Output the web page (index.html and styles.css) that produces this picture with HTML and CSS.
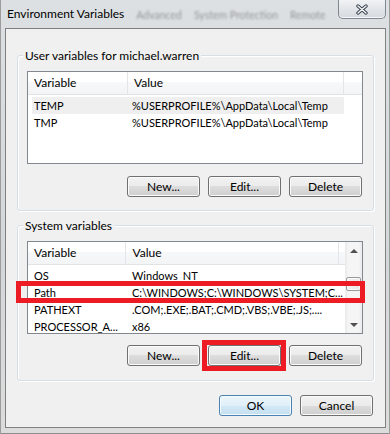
FILE: index.html
```html
<!DOCTYPE html>
<html lang="en">
<head>
  <meta charset="UTF-8" />
  <title>Environment Variables</title>
  <link rel="stylesheet" href="styles.css">
</head>
<body>

  <div class="window">
    <div class="titlebar">
      <span class="title">Environment Variables</span>
      <div class="ghost-tabs">
        <span>Advanced</span>
        <span>System Protection</span>
        <span>Remote</span>
      </div>
      <button class="close-btn">
        <svg width="12" height="11" viewBox="0 0 12 11">
          <path d="M2 2 L10 9 M10 2 L2 9" stroke="#3b4350" stroke-width="3.4" stroke-linecap="round" fill="none" />
          <path d="M2 2 L10 9 M10 2 L2 9" stroke="#f4f6f8" stroke-width="1.4" stroke-linecap="round" fill="none" />
        </svg>
      </button>
    </div>

    <div class="client">

      <!-- User variables -->
      <div class="group">
        <div class="group-title">User variables for michael.warren</div>
        <div class="list">
          <div class="list-main">
            <div class="list-head">
              <div class="head-cell h-var">Variable</div>
              <div class="head-cell h-val">Value</div>
              <div class="head-cell h-rest"></div>
            </div>
            <div class="rows">
              <div class="row active">
                <div class="c-var">TEMP</div>
                <div class="c-val">%USERPROFILE%\AppData\Local\Temp</div>
              </div>
              <div class="row">
                <div class="c-var">TMP</div>
                <div class="c-val">%USERPROFILE%\AppData\Local\Temp</div>
              </div>
            </div>
          </div>
        </div>
        <div class="buttons">
          <button class="btn">New...</button>
          <button class="btn">Edit...</button>
          <button class="btn">Delete</button>
        </div>
      </div>

      <!-- System variables -->
      <div class="group group-system">
        <div class="group-title">System variables</div>
        <div class="list">
          <div class="list-main">
            <div class="list-head">
              <div class="head-cell h-var">Variable</div>
              <div class="head-cell h-val">Value</div>
              <div class="head-cell h-rest"></div>
            </div>
            <div class="rows">
              <div class="row">
                <div class="c-var">OS</div>
                <div class="c-val">Windows_NT</div>
              </div>
              <div class="row marked">
                <div class="c-var">Path</div>
                <div class="c-val">C:\WINDOWS;C:\WINDOWS\SYSTEM;C...</div>
              </div>
              <div class="row">
                <div class="c-var">PATHEXT</div>
                <div class="c-val">.COM;.EXE;.BAT;.CMD;.VBS;.VBE;.JS;....</div>
              </div>
              <div class="row">
                <div class="c-var">PROCESSOR_A...</div>
                <div class="c-val">x86</div>
              </div>
            </div>
          </div>
          <div class="scrollbar">
            <div class="sb-btn"><span class="arrow-up"></span></div>
            <div class="sb-thumb"></div>
            <div class="sb-btn sb-down"><span class="arrow-down"></span></div>
          </div>
        </div>
        <div class="buttons">
          <button class="btn">New...</button>
          <button class="btn marked">Edit...</button>
          <button class="btn">Delete</button>
        </div>
      </div>

      <div class="footer">
        <button class="btn btn-default">OK</button>
        <button class="btn">Cancel</button>
      </div>

    </div>
  </div>

</body>
</html>
```

FILE: styles.css
```css
* {
  margin: 0;
  padding: 0;
  box-sizing: border-box;
}

body {
  background-color: #d6d9dc;
  color: #000;
  font-family: Lato, 'Liberation Sans', sans-serif;
  font-size: 12px;
}

.window {
  width: 390px;
  height: 434px;
  padding: 0 4px 6px 5px;
  display: flex;
  flex-direction: column;
  background: linear-gradient(to bottom, #dde0e3, #d4d7da 60%, #dcdcdc);
  box-shadow: inset 1px 0 0 #9c9c9c, inset -1px 0 0 #9c9c9c, inset 0 -1px 0 #8c8c8c;
  overflow: hidden;
}

/* Title bar */
.titlebar {
  height: 28px;
  display: flex;
  align-items: flex-start;
}

.title {
  padding: 7px 0 0 2px;
  line-height: 14px;
  white-space: nowrap;
}

.ghost-tabs {
  display: flex;
  gap: 12px;
  margin-left: 12px;
  padding-top: 8px;
  line-height: 14px;
  font-size: 10.5px;
  color: #4a4d52;
  opacity: 0.5;
  filter: blur(1.3px);
  white-space: nowrap;
}

.close-btn {
  margin-left: auto;
  width: 48px;
  height: 19px;
  border: 1px solid #7f8792;
  border-top: none;
  border-radius: 0 0 5px 5px;
  background: linear-gradient(to bottom, #f1f3f5, #e2e5e9 50%, #d6dade);
  box-shadow: inset 0 -1px 0 #f7f8f9;
  display: flex;
  align-items: center;
  justify-content: center;
}

/* Client area */
.client {
  flex: 1;
  border: 1px solid #808080;
  background-color: #f0f0f0;
  padding: 0 11px;
  display: flex;
  flex-direction: column;
}

.group {
  margin-top: 26px;
  border: 1px solid #d5dfe5;
  border-radius: 3px;
  box-shadow: inset 1px 1px 0 #fff, 1px 1px 0 #fff;
  padding: 0 10px 13px 9px;
  display: flex;
  flex-direction: column;
}

.group-system {
  margin-top: 14px;
  padding-bottom: 14px;
}

.group-title {
  align-self: flex-start;
  margin: -8px 0 0 -4px;
  padding: 0 2px;
  line-height: 15px;
  background-color: #f0f0f0;
}

/* List view */
.list {
  margin-top: 8px;
  height: 93px;
  border: 1px solid #828790;
  background-color: #fff;
  display: flex;
}

.list-main {
  flex: 1;
  min-width: 0;
  display: flex;
  flex-direction: column;
}

.list-head {
  display: flex;
  height: 23px;
  border-bottom: 1px solid #e2e3e5;
  background: linear-gradient(to bottom, #fff 45%, #f7f8f9 45%, #f3f4f6);
}

.head-cell {
  line-height: 22px;
  padding-left: 6px;
  border-right: 1px solid #e3e5e8;
}

.h-var {
  width: 100px;
}

.h-val {
  width: 216px;
}

.h-rest {
  flex: 1;
  border-right: none;
}

.rows {
  padding-top: 2px;
  font-size: 11px;
}

.row {
  display: flex;
  width: 312px;
  height: 17px;
  margin-left: 4px;
  line-height: 17px;
}

.row.active {
  background-color: #efefef;
}

.row.marked {
  position: relative;
}

.row.marked::after {
  content: '';
  position: absolute;
  top: -3px;
  bottom: -2px;
  left: -16px;
  right: -21px;
  border: 5px solid #ed1c24;
}

.c-var {
  width: 96px;
  padding-left: 2px;
  white-space: nowrap;
  overflow: hidden;
}

.c-val {
  flex: 1;
  padding-left: 4px;
  white-space: nowrap;
  overflow: hidden;
}

/* Scrollbar */
.scrollbar {
  width: 17px;
  display: flex;
  flex-direction: column;
  background: linear-gradient(to right, #e9e9e9, #f5f5f5 20%, #f5f5f5 80%, #eaeaea);
}

.sb-btn {
  height: 17px;
  display: flex;
  align-items: center;
  justify-content: center;
}

.sb-down {
  margin-top: auto;
}

.arrow-up {
  border-left: 4px solid transparent;
  border-right: 4px solid transparent;
  border-bottom: 4px solid #505050;
}

.arrow-down {
  border-left: 4px solid transparent;
  border-right: 4px solid transparent;
  border-top: 4px solid #505050;
}

.sb-thumb {
  margin: 18px 1px 0;
  height: 14px;
  border: 1px solid #9a9a9a;
  border-radius: 2px;
  background: linear-gradient(to right, #f3f3f3, #e6e6e6);
  box-shadow: inset 0 0 0 1px #fafafa;
}

/* Buttons */
.buttons {
  margin-top: 12px;
  padding-right: 1px;
  display: flex;
  justify-content: flex-end;
  gap: 8px;
}

.group-system .buttons {
  margin-top: 11px;
}

.btn {
  width: 73px;
  height: 21px;
  border: 1px solid #707070;
  border-radius: 3px;
  background: linear-gradient(to bottom, #f2f2f2, #ebebeb 50%, #dddddd 50%, #cfcfcf);
  box-shadow: inset 0 0 0 1px #fbfbfb;
  font: inherit;
  color: #000;
  line-height: 19px;
  text-align: center;
}

.btn.marked {
  position: relative;
}

.btn.marked::after {
  content: '';
  position: absolute;
  inset: -6px -6px -6px -7px;
  border: 5px solid #ed1c24;
}

.btn-default {
  border-color: #4a83b1;
  background: linear-gradient(to bottom, #edf6fb, #e0eff8 50%, #d2e8f5 50%, #c6e0f0);
  box-shadow: inset 0 0 0 1px #f4fafd;
}

.footer {
  margin-top: 14px;
  padding-right: 1px;
  display: flex;
  justify-content: flex-end;
  gap: 8px;
}
```
